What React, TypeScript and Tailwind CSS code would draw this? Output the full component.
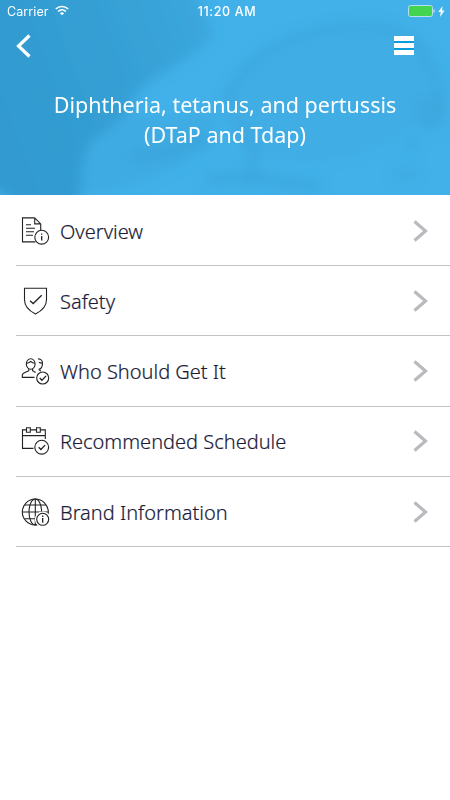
import type { ReactNode } from "react";

// Small round badge that overlaps the corner of a menu icon
const InfoBadge = ({ cx, cy, r }: { cx: number; cy: number; r: number }) => (
  <g>
    <circle cx={cx} cy={cy} r={r} fill="white" />
    <path d={`M${cx} ${cy - 1.2}v4.6M${cx} ${cy - 3.8}v1.4`} strokeWidth="1.3" />
  </g>
);

const CheckBadge = ({ cx, cy, r }: { cx: number; cy: number; r: number }) => (
  <g>
    <circle cx={cx} cy={cy} r={r} fill="white" />
    <path d={`M${cx - 3} ${cy}l2.2 2.3l4.2 -4.4`} strokeWidth="1.3" />
  </g>
);

const menuItems: { label: string; icon: ReactNode }[] = [
  {
    label: "Overview",
    icon: (
      <>
        <path d="M14.7 1.9H2.5v24h13M14.7 1.9l6 6V14M14.7 1.9v6h6" />
        <path d="M6 8.7h5M6 12.3h9M6 15.7h8M6 19.2h7" />
        <InfoBadge cx={21.7} cy={21.2} r={6.9} />
      </>
    ),
  },
  {
    label: "Safety",
    icon: (
      <>
        <path d="M4.5 2.3h22v11.5c0 6-4.5 11-11 14.3c-6.5-3.3-11-8.3-11-14.3z" />
        <path d="M10 14.7l3.2 2.8l8.5-8.2" strokeWidth="1.3" />
      </>
    ),
  },
  {
    label: "Who Should Get It",
    icon: (
      <>
        <ellipse cx="10.7" cy="8" rx="4.4" ry="5.3" />
        <path d="M6.5 7.2c2 0 3-.7 4.2-1.7c1.2 1 2.2 1.7 4.2 1.7" />
        <path d="M8.8 12.7v2c-1.5 1.6-6.5 1.7-6.5 4.5v2.2h12.2M12.6 12.7v2l3 1.8" />
        <path d="M18 2.9c3.3-.2 4.7 2.1 4.5 5c-.2 2.8-1.4 5.2-3.8 5.4M19 6.2c1 .7 2.2.9 3.4 1M18.8 13.5l2.2 1.6" />
        <CheckBadge cx={22.7} cy={22} r={6} />
      </>
    ),
  },
  {
    label: "Recommended Schedule",
    icon: (
      <>
        <path d="M6.5 3.9H2.5v18.5h11M10.3 3.9h6.2M20.3 3.9h5v9M2.5 9.6h22.8" />
        <path d="M6.5 1.7h3.8v4.6H6.5zM16.5 1.7h3.8v4.6h-3.8z" />
        <CheckBadge cx={21.7} cy={21.2} r={6.9} />
      </>
    ),
  },
  {
    label: "Brand Information",
    icon: (
      <>
        <circle cx="15.3" cy="15" r="13" />
        <path d="M15.3 2v26M2.3 15h26M4.5 8h21.6M4.5 21.7h21.6" />
        <ellipse cx="15.3" cy="15" rx="6.3" ry="13" />
        <circle cx="22.7" cy="22.3" r="7.3" fill="white" stroke="white" />
        <InfoBadge cx={22.7} cy={22.3} r={6} />
      </>
    ),
  },
];

const StatusBar = () => (
  <div className="grid h-6 grid-cols-3 items-center pl-[7px] pr-[5px] font-[Inter,sans-serif] text-[12.5px] leading-6">
    <div className="flex items-center gap-[6px]">
      <span className="tracking-[0.1px]">Carrier</span>
      <svg width="14" height="11" viewBox="0 0 14 11" fill="none" stroke="white" strokeWidth="1.7" className="mb-1">
        <path d="M.8 4a9 9 0 0 1 12.4 0M3.1 6.5a5.7 5.7 0 0 1 7.8 0" />
        <path d="M7 10.3L4.9 8.2a3 3 0 0 1 4.2 0z" fill="white" stroke="none" />
      </svg>
    </div>
    <span className="pl-[2px] text-center font-medium tracking-[0.65px]">11:20 AM</span>
    <div className="mb-[2px] flex items-center justify-end gap-[3px]">
      <svg width="27" height="12" viewBox="0 0 27 12">
        <rect x=".5" y=".5" width="24" height="11" rx="2" fill="#43d551" stroke="#b9dff2" />
        <path d="M25.5 4v4q1.3-.5 1.3-2t-1.3-2z" fill="#c6e8f8" />
      </svg>
      <svg width="7" height="11" viewBox="0 0 7 11" fill="white">
        <path d="M4.5 0L.3 6h2.5L2 11l4.5-6.5H4z" />
      </svg>
    </div>
  </div>
);

// Soft shapes of the photo behind the header tint
const HeaderBackdrop = () => (
  <svg className="absolute inset-0 h-full w-full" viewBox="0 0 450 195" preserveAspectRatio="none">
    <defs>
      <filter id="soft" x="-30%" y="-30%" width="160%" height="160%">
        <feGaussianBlur stdDeviation="6" />
      </filter>
      <linearGradient id="shade" gradientUnits="userSpaceOnUse" x1="0" y1="100" x2="215" y2="20">
        <stop offset="0" stopColor="#309ad0" />
        <stop offset="0.5" stopColor="#359fd4" />
        <stop offset="1" stopColor="#3ba7dd" />
      </linearGradient>
    </defs>
    <g filter="url(#soft)">
      <path d="M-30-30H185L214 36Q190 58 158 76Q134 90 128 112Q112 128 90 144L82 170Q82 190 76 215H30L-10 186L-30 170z" fill="url(#shade)" />
      <path d="M80 160L128 112Q170 125 210 112L222 140Q150 190 80 195z" fill="#39a5db" opacity=".45" />
      <path d="M230 95Q248 44 330 29T430 65Q444 85 440 115" fill="none" stroke="#379fd3" strokeWidth="9" opacity=".45" />
      <path d="M235 90Q260 40 350 30T430 80L410 130Q330 180 240 150z" fill="#3ba8df" opacity=".4" />
      <path d="M130 155Q160 161 205 137" fill="none" stroke="#359dd1" strokeWidth="11" opacity=".45" />
      <path d="M230 90Q226 115 240 130T254 157L250 184" fill="none" stroke="#369dd1" strokeWidth="10" opacity=".4" />
      <path d="M205 181Q245 172 320 188" fill="none" stroke="#369dd1" strokeWidth="13" opacity=".35" />
      <ellipse cx="430" cy="112" rx="15" ry="20" fill="#369ed3" opacity=".4" />
      <ellipse cx="412" cy="144" rx="8" ry="6" fill="#369ed3" opacity=".35" />
      <ellipse cx="405" cy="174" rx="14" ry="7" fill="#369ed3" opacity=".3" />
    </g>
  </svg>
);

const App = () => {
  return (
    <div className="h-[800px] w-[450px] overflow-hidden bg-white font-['Noto_Sans',sans-serif]">
      <header className="relative h-[195px] overflow-hidden bg-[#42b1e9] text-white">
        <HeaderBackdrop />
        <div className="relative">
          <StatusBar />
          <nav className="flex h-[43px] items-center justify-between pl-4 pr-9">
            <button aria-label="Back">
              <svg width="15" height="24" viewBox="0 0 15 24" fill="none" stroke="white" strokeWidth="3.2">
                <path d="M13.5 1.5L2.5 12L13.5 22.5" />
              </svg>
            </button>
            <button aria-label="Menu" className="flex w-5 flex-col gap-[2px] bg-[#0a9bdc]">
              <span className="h-[5px] bg-white" />
              <span className="h-[5px] bg-white" />
              <span className="h-[5px] bg-white" />
            </button>
          </nav>
          <h1 className="pt-[23px] text-center text-[21.5px] leading-[29.5px]">
            Diphtheria, tetanus, and pertussis
            <br />
            (DTaP and Tdap)
          </h1>
        </div>
      </header>

      <ul className="pt-[0.95px] pl-4">
        {menuItems.map((item) => (
          <li
            key={item.label}
            className="flex h-[70.25px] items-center border-b border-[#c3c3c7] pt-[0.2px] pr-[21px] pl-1"
          >
            <svg width="30" height="30" viewBox="0 0 30 30" fill="none" stroke="#222222" strokeWidth="1.1">
              {item.icon}
            </svg>
            <span className="ml-[10px] flex-1 pt-[2px] text-[20px] leading-7 font-light text-[#1c1c38] [-webkit-text-stroke:0.2px_#1c1c38]">
              {item.label}
            </span>
            <svg width="17" height="22" viewBox="0 0 17 22" fill="none" stroke="#b9b9be" strokeWidth="3.2">
              <path d="M2.5 1.5L13.5 11L2.5 20.5" />
            </svg>
          </li>
        ))}
      </ul>
    </div>
  );
};

export default App;
